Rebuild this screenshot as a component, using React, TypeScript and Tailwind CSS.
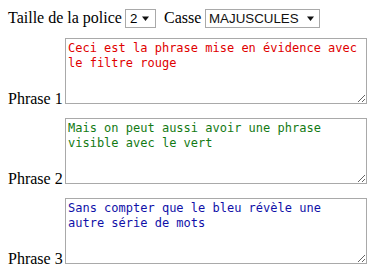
import React, { useState } from 'react';

const phrases = [
    { id: 1, text: 'Ceci est la phrase mise en évidence avec le filtre rouge', color: 'text-[#e00000]' },
    { id: 2, text: 'Mais on peut aussi avoir une phrase visible avec le vert', color: 'text-[#137a13]' },
    { id: 3, text: 'Sans compter que le bleu révèle une autre série de mots', color: 'text-[#1010a8]' },
];

const Arrow = () => (
    <svg width="7" height="5" viewBox="0 0 7 5" className="shrink-0">
        <path d="M0 0.5 L7 0.5 L3.5 5 Z" fill="#111" />
    </svg>
);

const App: React.FC = () => {
    const [taille, setTaille] = useState('2');
    const [casse, setCasse] = useState('MAJUSCULES');

    return (
        <div className="w-[380px] h-[276px] bg-white pl-2 pt-[9px] font-['Liberation_Serif',serif] text-[16px] text-black">
            <div className="flex items-center h-[19px] leading-[19px]">
                <span className="w-[117px] whitespace-nowrap relative -top-[1px]">Taille de la police</span>
                <div className="flex items-center w-[31px] h-[19px] border border-[#a9a9a9] bg-white pr-[6px]">
                    <select
                        value={taille}
                        onChange={(e) => setTaille(e.target.value)}
                        className="appearance-none bg-transparent outline-none pl-[4px] w-full font-['Liberation_Sans',Arial,sans-serif] text-[13.33px] leading-[17px] text-black"
                    >
                        {['1', '2', '3', '4', '5'].map(v => <option key={v} value={v}>{v}</option>)}
                    </select>
                    <Arrow />
                </div>
                <span className="ml-[8px] w-[41px] whitespace-nowrap relative -top-[1px]">Casse</span>
                <div className="flex items-center w-[115px] h-[19px] border border-[#a9a9a9] bg-white pr-[5px]">
                    <select
                        value={casse}
                        onChange={(e) => setCasse(e.target.value)}
                        className="appearance-none bg-transparent outline-none pl-[3px] w-full font-['Liberation_Sans',Arial,sans-serif] text-[13.33px] leading-[17px] text-[#111]"
                    >
                        <option>MAJUSCULES</option>
                        <option>minuscules</option>
                    </select>
                    <Arrow />
                </div>
            </div>

            <div className="flex flex-col gap-[11px] mt-[10px]">
                {phrases.map(p => (
                    <div key={p.id} className="flex items-end">
                        <span className="w-[57px] whitespace-nowrap leading-[16px]">Phrase {p.id}</span>
                        <textarea
                            defaultValue={p.text}
                            className={`w-[302px] h-[66px] mb-[3px] border border-[#a9a9a9] px-[2px] py-[2px] font-['DejaVu_Sans_Mono',monospace] text-[12px] leading-[15px] ${p.color} outline-none`}
                        />
                    </div>
                ))}
            </div>
        </div>
    );
};

export default App;
